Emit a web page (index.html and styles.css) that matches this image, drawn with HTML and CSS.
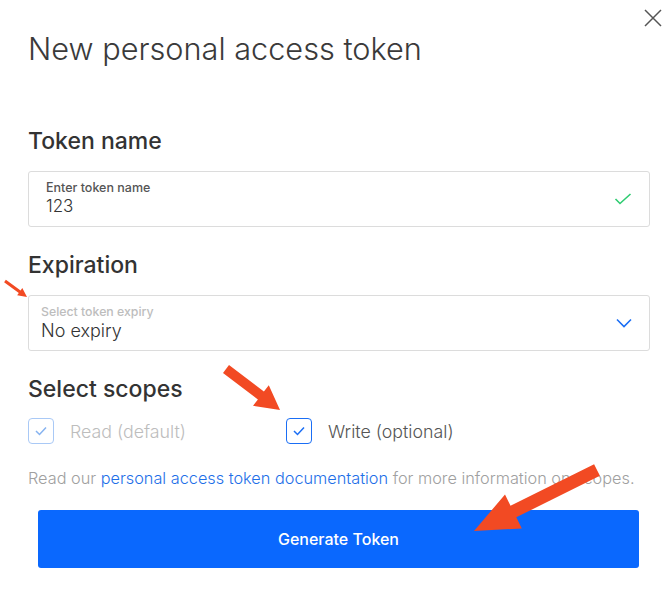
FILE: index.html
```html
<!DOCTYPE html>
<html lang="en">
<head>
<meta charset="utf-8">
<title>New personal access token</title>
<link rel="stylesheet" href="styles.css">
</head>
<body>
<div class="modal">
  <button class="close" aria-label="Close">
    <svg width="18" height="18" viewBox="0 0 18 18"><path d="M1 1L17 17M17 1L1 17" stroke="#555" stroke-width="1.5" fill="none"/></svg>
  </button>
  <h1 class="title">New personal access token</h1>

  <h2 class="section-title first">Token name</h2>
  <div class="field">
    <div class="field-body">
      <div class="field-label">Enter token name</div>
      <div class="field-value">123</div>
    </div>
    <svg class="field-icon" width="18" height="12" viewBox="0 0 18 12"><path d="M1.5 6L6 10.5L16.5 1" stroke="#2ecc71" stroke-width="1.6" fill="none"/></svg>
  </div>

  <h2 class="section-title">Expiration</h2>
  <div class="field select">
    <div class="field-body">
      <div class="field-label muted">Select token expiry</div>
      <div class="field-value big">No expiry</div>
    </div>
    <svg class="field-icon chevron" width="16" height="10" viewBox="0 0 16 10"><path d="M1 1.5L8 8.5L15 1.5" stroke="#1a6ef5" stroke-width="1.6" fill="none"/></svg>
  </div>

  <h2 class="section-title">Select scopes</h2>
  <div class="scopes">
    <label class="scope disabled">
      <span class="box"><svg width="12" height="10" viewBox="0 0 12 10"><path d="M1 5L4.5 8.5L11 1.5" stroke="currentColor" stroke-width="1.5" fill="none"/></svg></span>
      <span class="scope-text">Read (default)</span>
    </label>
    <label class="scope">
      <span class="box"><svg width="12" height="10" viewBox="0 0 12 10"><path d="M1 5L4.5 8.5L11 1.5" stroke="currentColor" stroke-width="1.5" fill="none"/></svg></span>
      <span class="scope-text">Write (optional)</span>
    </label>
  </div>

  <p class="help">Read our <a href="#">personal access token documentation</a> for more information on scopes.</p>

  <button class="generate">Generate Token</button>

  <svg class="annotations" width="669" height="595" viewBox="0 0 669 595">
    <polygon fill="#f24a23" points="4.1,282.3 18.8,293 17.1,295.3 27,297 22.3,288.1 20.6,290.4 5.9,279.7"/>
    <polygon fill="#f24a23" points="223,373 257.9,399.5 253,405.8 280,410 268.8,385.2 263.9,391.5 229,365"/>
    <polygon fill="#f24a23" points="594.1,464.2 510.5,505.7 505,494.5 474,531 521.8,528.5 516.3,517.3 599.9,475.8"/>
  </svg>
</div>
</body>
</html>
```

FILE: styles.css
```css
* { box-sizing: border-box; }

html, body {
  margin: 0;
  padding: 0;
  background: #fff;
}

body {
  font-family: Inter, "Open Sans", "Liberation Sans", sans-serif;
  color: #333;
}

.modal {
  position: relative;
  width: 669px;
  height: 595px;
  padding: 31px 19px 0 28px;
  overflow: hidden;
}

.close {
  position: absolute;
  top: 9px;
  right: 7px;
  width: 18px;
  height: 18px;
  padding: 0;
  border: 0;
  background: none;
  display: flex;
}

.title {
  margin: 0;
  font-size: 30.7px;
  line-height: 36px;
  font-weight: 300;
  color: #3a3a3a;
}

.section-title {
  margin: 24px 0 0;
  font-size: 23px;
  line-height: 28px;
  font-weight: 500;
  color: #333;
}

.section-title.first {
  margin-top: 60px;
}

.field {
  margin-top: 16px;
  height: 56px;
  border: 1px solid #dcdcdc;
  border-radius: 3px;
  display: flex;
  align-items: center;
  padding: 0 17px 0 17px;
}

.field.select {
  height: 56px;
  padding-left: 12px;
}

.field-body {
  flex: 1;
  display: flex;
  flex-direction: column;
}

.field-label {
  font-size: 12.5px;
  line-height: 14px;
  font-weight: 500;
  color: #555;
}

.field-label.muted {
  font-size: 12.3px;
  color: #bdbdbd;
}

.field-value {
  font-size: 17px;
  line-height: 22px;
  font-weight: 300;
  color: #333;
}

.field-value.big {
  font-size: 18px;
  line-height: 23px;
}

.field-icon {
  flex: none;
}

.scopes {
  margin-top: 15px;
  display: grid;
  grid-template-columns: 258px auto;
}

.scope {
  display: flex;
  align-items: center;
  gap: 16px;
  font-size: 17.8px;
  font-weight: 300;
  color: #555;
}

.box {
  width: 26px;
  height: 26px;
  border: 1.5px solid #1a6ef5;
  border-radius: 4px;
  color: #1a6ef5;
  display: flex;
  align-items: center;
  justify-content: center;
}

.scope.disabled .box {
  border-color: #a9c9f6;
  color: #86b3f0;
}

.scope.disabled .scope-text {
  color: #bdbdbd;
}

.help {
  margin: 24px 0 0;
  font-size: 16.3px;
  line-height: 20px;
  font-weight: 300;
  color: #a0a0a0;
}

.help a {
  color: #1e6fe8;
  text-decoration: none;
}

.generate {
  display: block;
  margin: 22px 0 0 10px;
  width: 601px;
  height: 58px;
  border: 0;
  border-radius: 3px;
  background: #0a68fe;
  color: #fff;
  font-family: inherit;
  font-size: 16px;
  font-weight: 500;
}

.annotations {
  position: absolute;
  left: 0;
  top: 0;
  pointer-events: none;
}
```
